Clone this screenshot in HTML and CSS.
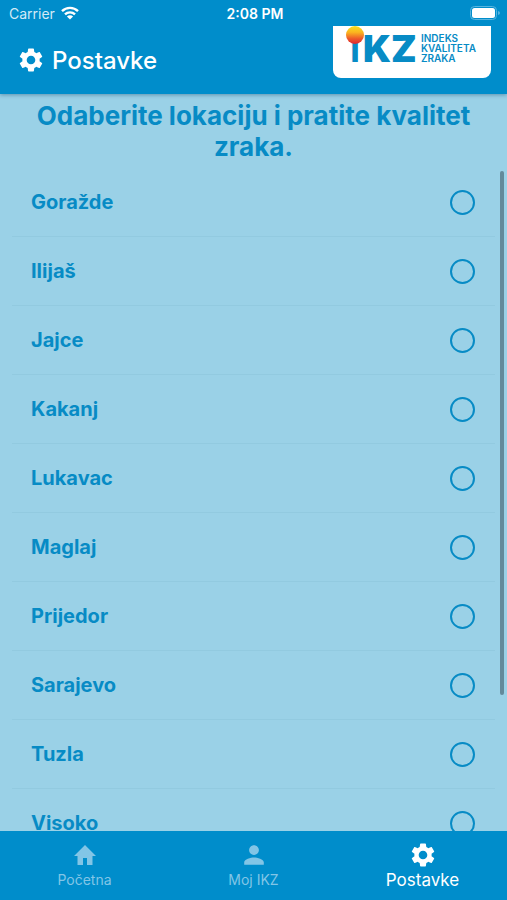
FILE: index.html
```
<!DOCTYPE html>
<html lang="bs">
<head>
<meta charset="utf-8">
<meta name="viewport" content="width=device-width, initial-scale=1">
<title>Postavke</title>
<link rel="stylesheet" href="styles.css">
</head>
<body>
<svg class="defs" aria-hidden="true">
  <symbol id="gear" viewBox="2 2 20 20"><path d="M19.14 12.94c.04-.3.06-.61.06-.94 0-.32-.02-.64-.07-.94l2.03-1.58c.18-.14.23-.41.12-.61l-1.92-3.32c-.12-.22-.37-.29-.59-.22l-2.39.96c-.5-.38-1.03-.7-1.62-.94l-.36-2.54c-.04-.24-.24-.41-.48-.41h-3.84c-.24 0-.43.17-.47.41l-.36 2.54c-.59.24-1.13.57-1.62.94l-2.39-.96c-.22-.08-.47 0-.59.22L2.74 8.87c-.12.21-.08.47.12.61l2.03 1.58c-.05.3-.09.63-.09.94s.02.64.07.94l-2.03 1.58c-.18.14-.23.41-.12.61l1.92 3.32c.12.22.37.29.59.22l2.39-.96c.5.38 1.03.7 1.62.94l.36 2.54c.05.24.24.41.48.41h3.84c.24 0 .44-.17.47-.41l.36-2.54c.59-.24 1.13-.56 1.62-.94l2.39.96c.22.08.47 0 .59-.22l1.92-3.32c.12-.22.07-.47-.12-.61l-2.01-1.58zM12 15.6c-1.98 0-3.6-1.62-3.6-3.6s1.62-3.6 3.6-3.6 3.6 1.62 3.6 3.6-1.62 3.6-3.6 3.6z"/></symbol>
</svg>
<header class="top">
  <div class="status">
    <span class="carrier">Carrier
      <svg class="wifi" viewBox="0 0 18 14" aria-hidden="true"><g fill="none" stroke="currentColor" stroke-width="2.4"><path d="M1 5.2a11.4 11.4 0 0 1 16 0"/><path d="M4 8.4a7.1 7.1 0 0 1 10 0"/></g><path d="M9 13.6 5.9 10.5a4.4 4.4 0 0 1 6.2 0z" fill="currentColor"/></svg>
    </span>
    <time class="clock">2:08 PM</time>
    <span class="power">
      <svg class="battery" viewBox="0 0 31 14" aria-hidden="true"><rect x=".5" y=".5" width="26" height="13" rx="4" fill="none" stroke="#58b4df"/><rect x="2" y="2" width="23" height="10" rx="2.5" fill="#fff"/><path d="M28 5v4q2-.6 2-2t-2-2z" fill="#58b4df"/></svg>
    </span>
  </div>
  <div class="bar">
    <h1 class="title"><svg class="title-icon" aria-hidden="true"><use href="#gear"/></svg>Postavke</h1>
    <div class="logo">
      <svg class="logo-art" viewBox="0 0 158 52" role="img" aria-label="IKZ Indeks kvaliteta zraka">
        <defs><linearGradient id="sun" x1="0" y1="0" x2="0" y2="1"><stop offset="0" stop-color="#f6e01d"/><stop offset=".35" stop-color="#fbb51f"/><stop offset=".7" stop-color="#ee5a2a"/><stop offset="1" stop-color="#dc2432"/></linearGradient></defs>
        <text class="mark stem" x="17" y="36">ı</text>
        <text class="mark" x="30" y="36">KZ</text>
        <circle cx="22" cy="9" r="9" fill="url(#sun)"/>
        <text class="tag" x="88" y="16">INDEKS</text>
        <text class="tag" x="88" y="26">KVALITETA</text>
        <text class="tag" x="88" y="36">ZRAKA</text>
      </svg>
    </div>
  </div>
</header>
<main class="content">
  <h2 class="prompt">Odaberite lokaciju i pratite kvalitet zraka.</h2>
  <div class="list">
    <label class="row">Goražde<input type="radio" name="city"></label>
    <label class="row">Ilijaš<input type="radio" name="city"></label>
    <label class="row">Jajce<input type="radio" name="city"></label>
    <label class="row">Kakanj<input type="radio" name="city"></label>
    <label class="row">Lukavac<input type="radio" name="city"></label>
    <label class="row">Maglaj<input type="radio" name="city"></label>
    <label class="row">Prijedor<input type="radio" name="city"></label>
    <label class="row">Sarajevo<input type="radio" name="city"></label>
    <label class="row">Tuzla<input type="radio" name="city"></label>
    <label class="row">Visoko<input type="radio" name="city"></label>
    <div class="thumb"></div>
  </div>
</main>
<nav class="tabs">
  <a class="tab" href="#home"><svg class="tab-icon" viewBox="0 0 24 24" aria-hidden="true"><path d="M10 22v-7h4v7h5.500v-9H23L12 2 1 13h3.500v9z"/></svg>Početna</a>
  <a class="tab" href="#my"><svg class="tab-icon" viewBox="0 0 24 24" aria-hidden="true"><path d="M12 12c2.700 0 4.900-2.200 4.900-4.900S14.700 2.200 12 2.200 7.100 4.400 7.100 7.100 9.300 12 12 12zm0 2.400c-3.300 0-9.800 1.600-9.800 4.900v2.400h19.600v-2.400c0-3.300-6.500-4.900-9.800-4.900z"/></svg>Moj IKZ</a>
  <a class="tab active" href="#settings" aria-current="page"><svg class="tab-icon" aria-hidden="true"><use href="#gear"/></svg>Postavke</a>
</nav>
</body>
</html>
```

FILE: styles.css
```
* { box-sizing: border-box; }

body {
  margin: 0;
  height: 100vh;
  display: flex;
  flex-direction: column;
  overflow: hidden;
  background: #9ad1e7;
  color: #078bc5;
  font-family: Inter, "Liberation Sans", sans-serif;
}

svg { display: block; fill: currentColor; }
.defs { position: absolute; width: 0; height: 0; }

.top {
  position: relative;
  background: #008dcb;
  color: #fff;
  box-shadow: 0 1px 4px rgba(0, 50, 90, .4);
}

.status {
  display: grid;
  grid-template-columns: 1fr auto 1fr;
  align-items: center;
  height: 26px;
  padding: 0 6px 0 9px;
  font-size: 14px;
}
.carrier { display: flex; align-items: center; gap: 6px; color: #d3eaf6; }
.wifi { width: 18px; height: 14px; color: #fff; }
.clock { font-weight: 600; }
.power { display: flex; justify-content: flex-end; }
.battery { width: 31px; height: 14px; }

.bar {
  display: flex;
  justify-content: space-between;
  align-items: flex-start;
  height: 68px;
  padding: 0 16px 0 19px;
}
.title {
  display: flex;
  align-items: center;
  gap: 9px;
  height: 68px;
  margin: 0;
  font-size: 24px;
  font-weight: 500;
}
.title-icon { width: 24px; height: 24px; }
.logo {
  background: #fff;
  border-radius: 0 0 8px 8px;
}
.logo-art { width: 158px; height: 52px; }
.mark { font-size: 37px; font-weight: 900; fill: #078bc5; }
.stem { font-weight: 700; }
.tag { font-size: 10px; font-weight: 600; fill: #078bc5; }

.content {
  flex: 1;
  min-height: 0;
  display: flex;
  flex-direction: column;
}
.prompt {
  margin: 0;
  padding: 6px 24px;
  font-size: 26px;
  line-height: 31px;
  font-weight: 700;
  text-align: center;
}
.list {
  position: relative;
  flex: 1;
  min-height: 0;
  overflow: hidden;
  padding: 0 12px;
}
.row {
  display: flex;
  align-items: center;
  justify-content: space-between;
  height: 69px;
  padding: 0 20px 0 19px;
  border-bottom: 1px solid #92cae0;
  font-size: 20px;
  font-weight: 700;
}
.row input {
  appearance: none;
  width: 25px;
  height: 25px;
  margin: 0;
  border: 2px solid #078bc5;
  border-radius: 50%;
}
.row input:checked { background: #078bc5; box-shadow: inset 0 0 0 4px #9ad1e7; }
.thumb {
  position: absolute;
  top: 3px;
  right: 3px;
  width: 4px;
  height: 79%;
  border-radius: 2px;
  background: #638a9b;
}

.tabs {
  display: flex;
  height: 69px;
  background: #008dcb;
}
.tab {
  flex: 1;
  display: flex;
  flex-direction: column;
  align-items: center;
  gap: 3px;
  padding-top: 12px;
  color: #82c5e6;
  font-size: 14px;
  line-height: 20px;
  text-decoration: none;
}
.tab-icon { width: 24px; height: 24px; }
.tab.active { color: #fff; font-size: 17px; }
```
